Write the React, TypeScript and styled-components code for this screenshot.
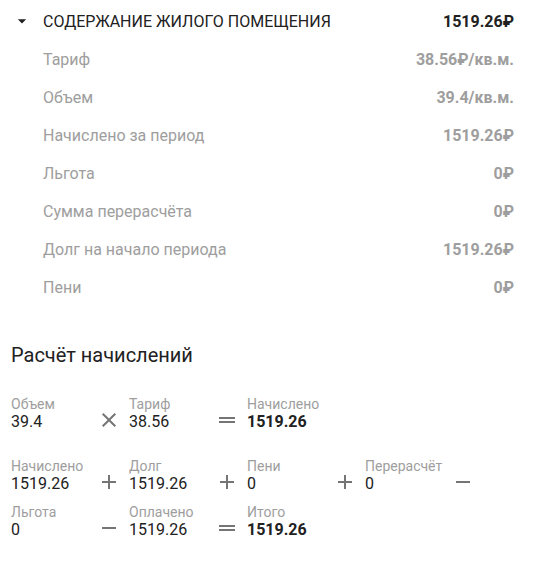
import React from "react";
import styled, { createGlobalStyle } from "styled-components";

const GlobalStyle = createGlobalStyle`
  body {
    margin: 0;
    background: #fff;
    font-family: Roboto, "Liberation Sans", Arial, sans-serif;
  }
`;

const Page = styled.div`
  padding-top: 2px;
  padding-bottom: 20px;
`;

const Header = styled.div`
  display: flex;
  align-items: center;
  height: 38px;
  padding: 0 24px 0 12px;
  color: #212121;
  font-size: 16px;
`;

const Caret = styled.svg`
  width: 20px;
  height: 20px;
  fill: #212121;
  margin-right: 11px;
  flex-shrink: 0;
`;

const HeaderTitle = styled.span`
  flex: 1;
  text-transform: uppercase;
`;

const HeaderSum = styled.span`
  font-weight: 700;
`;

const Row = styled.div`
  display: flex;
  align-items: center;
  justify-content: space-between;
  height: 38px;
  padding: 0 24px 0 43px;
  font-size: 16px;
  color: #9e9e9e;
`;

const RowValue = styled.span`
  font-weight: 700;
`;

const Heading = styled.h2`
  margin: 37px 0 29px 11px;
  font-size: 20px;
  line-height: 24px;
  font-weight: 400;
  color: #212121;
`;

const Group = styled.div`
  display: flex;
  flex-wrap: wrap;
  row-gap: 10px;
  padding-left: 11px;
  max-width: 472px;
  & + & {
    margin-top: 26px;
  }
`;

const Cell = styled.div`
  display: flex;
  align-items: flex-end;
  width: 118px;
`;

const Texts = styled.div`
  width: 86px;
  display: flex;
  flex-direction: column;
`;

const Label = styled.span`
  font-size: 14px;
  line-height: 16px;
  color: #9e9e9e;
`;

const Value = styled.span<{ $bold?: boolean }>`
  font-size: 16px;
  line-height: 20px;
  color: #212121;
  font-weight: ${(p) => (p.$bold ? 700 : 400)};
`;

const OpIcon = styled.svg`
  width: 24px;
  height: 24px;
  fill: #757575;
  flex-shrink: 0;
`;

type Op = "times" | "plus" | "minus" | "equals";

const opPaths: Record<Op, string> = {
  times:
    "M19 6.41L17.59 5 12 10.59 6.41 5 5 6.41 10.59 12 5 17.59 6.41 19 12 13.41 17.59 19 19 17.59 13.41 12z",
  plus: "M19 13h-6v6h-2v-6H5v-2h6V5h2v6h6v2z",
  minus: "M19 13H5v-2h14v2z",
  equals: "M20 9H4v2h16V9zM4 15h16v-2H4v2z",
};

interface ITerm {
  label: string;
  value: string;
  op?: Op;
  bold?: boolean;
}

const Term: React.FC<ITerm> = ({ label, value, op, bold }) => (
  <Cell>
    <Texts>
      <Label>{label}</Label>
      <Value $bold={bold}>{value}</Value>
    </Texts>
    {op && (
      <OpIcon viewBox="0 0 24 24">
        <path d={opPaths[op]} />
      </OpIcon>
    )}
  </Cell>
);

const rows = [
  ["Тариф", "38.56₽/кв.м."],
  ["Объем", "39.4/кв.м."],
  ["Начислено за период", "1519.26₽"],
  ["Льгота", "0₽"],
  ["Сумма перерасчёта", "0₽"],
  ["Долг на начало периода", "1519.26₽"],
  ["Пени", "0₽"],
];

const first: ITerm[] = [
  { label: "Объем", value: "39.4", op: "times" },
  { label: "Тариф", value: "38.56", op: "equals" },
  { label: "Начислено", value: "1519.26", bold: true },
];

const second: ITerm[] = [
  { label: "Начислено", value: "1519.26", op: "plus" },
  { label: "Долг", value: "1519.26", op: "plus" },
  { label: "Пени", value: "0", op: "plus" },
  { label: "Перерасчёт", value: "0", op: "minus" },
  { label: "Льгота", value: "0", op: "minus" },
  { label: "Оплачено", value: "1519.26", op: "equals" },
  { label: "Итого", value: "1519.26", bold: true },
];

const App: React.FC = () => (
  <Page>
    <GlobalStyle />
    <Header>
      <Caret viewBox="0 0 24 24">
        <path d="M7 10l5 5 5-5z" />
      </Caret>
      <HeaderTitle>Содержание жилого помещения</HeaderTitle>
      <HeaderSum>1519.26₽</HeaderSum>
    </Header>
    {rows.map(([label, value]) => (
      <Row key={label}>
        <span>{label}</span>
        <RowValue>{value}</RowValue>
      </Row>
    ))}
    <Heading>Расчёт начислений</Heading>
    <Group>
      {first.map((t) => (
        <Term key={t.label} {...t} />
      ))}
    </Group>
    <Group>
      {second.map((t) => (
        <Term key={t.label} {...t} />
      ))}
    </Group>
  </Page>
);

export default App;
